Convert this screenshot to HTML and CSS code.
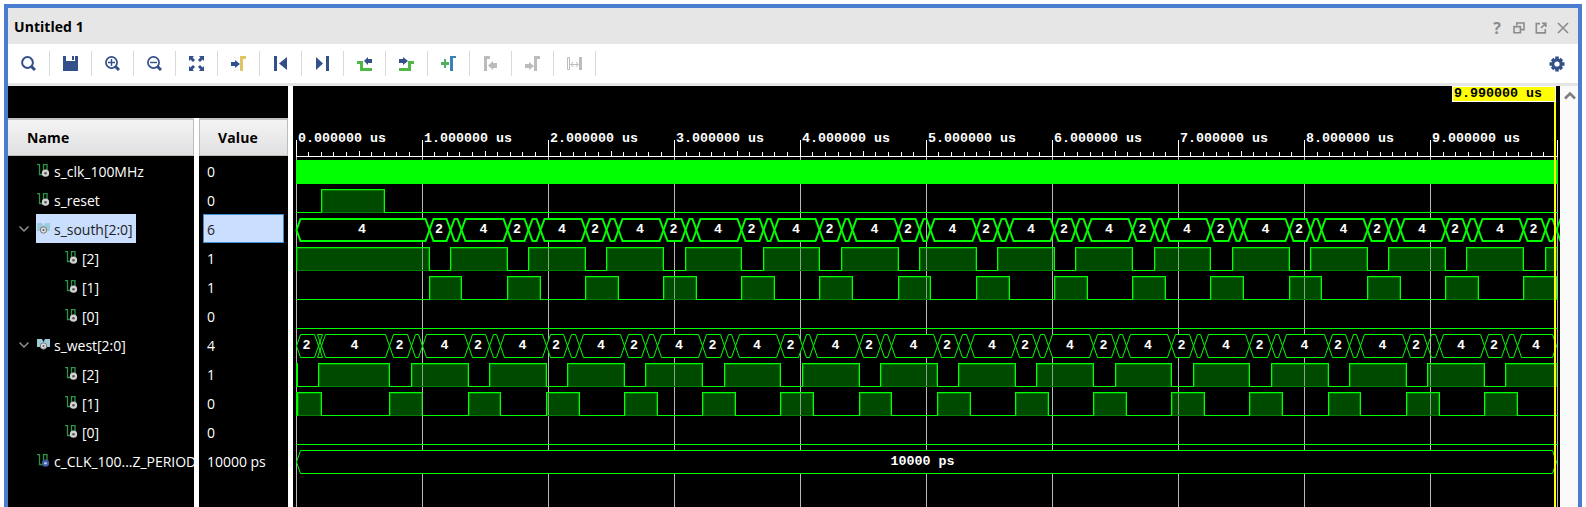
FILE: index.html
```html
<!DOCTYPE html>
<html lang="en">
<head>
<meta charset="utf-8">
<title>Untitled 1</title>
<link rel="stylesheet" href="styles.css">
</head>
<body>
<div class="window">
  <header class="titlebar">
    <h1 class="title">Untitled 1</h1>
    <div class="window-actions">
      <span class="help">?</span>
      <svg width="12" height="12" viewBox="0 0 12 12"><path d="M3.8 3.2V1h7.2v6.6H8.2M1 4.6h6.4v6.2H1z" class="line-grey"/></svg>
      <svg width="12" height="12" viewBox="0 0 12 12"><path d="M5 1.6H1.3v9.3h9V7M6 6l4-4M7 1.3h3.8V5" class="line-grey"/></svg>
      <svg width="12" height="12" viewBox="0 0 12 12"><path d="M1 1l10 10M11 1L1 11" class="line-grey"/></svg>
    </div>
  </header>

  <nav class="toolbar">
    <span class="tool"><svg width="15" height="15"><circle cx="6.5" cy="6.5" r="5.4" class="ring"/><path d="M10.5 10.5l3.5 3.5" class="handle"/></svg></span>
    <span class="tool"><svg width="15" height="15"><path d="M0 0h3v5h9V0h3v15H0z" fill="#34508a"/><path d="M9 0h2v4H9z" fill="#34508a"/></svg></span>
    <span class="tool"><svg width="15" height="15"><circle cx="6.5" cy="6.5" r="5.6" class="ring thin"/><path d="M10.5 10.5l3.5 3.5" class="handle"/><path d="M3 6.5h7M6.5 3v7" class="sign"/></svg></span>
    <span class="tool"><svg width="15" height="15"><circle cx="6.5" cy="6.5" r="5.6" class="ring thin"/><path d="M10.5 10.5l3.5 3.5" class="handle"/><path d="M3 6.5h7" class="sign"/></svg></span>
    <span class="tool"><svg width="15" height="15"><path d="M0 0h5L3.6 1.4 6 4 4 6 1.400 3.600 0 5zM15 0v5l-1.400-1.400L11 6 9 4l2.400-2.600L10 0zM0 15v-5l1.400 1.400L4 9l2 2-2.400 2.600L5 15zM15 15h-5l1.400-1.400L9 11l2-2 2.600 2.400L15 10z" fill="#34508a"/></svg></span>
    <span class="tool"><svg width="15" height="15"><path d="M0 6h4V4l5 4-5 4v-2H0z" fill="#34508a"/><path d="M9 0h6v3h-3v12H9z" fill="#e0c562"/></svg></span>
    <span class="tool"><svg width="15" height="15"><path d="M1 0h3v15H1zM14 1v13L6 7.500z" fill="#34508a"/></svg></span>
    <span class="tool"><svg width="15" height="15"><path d="M11 0h3v15h-3zM1 1v13l7-6.500z" fill="#34508a"/></svg></span>
    <span class="tool"><svg width="15" height="15"><path d="M0 5h6v7h9v3H3V8H0z" fill="#4db944"/><path d="M15 3h-4V1L7 5l4 4V7h4z" fill="#34508a"/></svg></span>
    <span class="tool"><svg width="15" height="15"><path d="M0 12h9V5h6v3h-3v7H0z" fill="#4db944"/><path d="M0 3h4V1l5 4-5 4V7H0z" fill="#34508a"/></svg></span>
    <span class="tool"><svg width="15" height="15"><path d="M0 6h3V3h2v3h3v3H5v3H3V9H0z" fill="#4db05a"/><path d="M9 0h6v2h-3v13H9z" fill="#3b80b8"/></svg></span>
    <span class="tool"><svg width="15" height="15"><path d="M1 0h6v3H4v12H1zM14 7h-4V5L5 9.500l5 4.500v-2h4z" fill="#bcbcbc"/></svg></span>
    <span class="tool"><svg width="15" height="15"><path d="M15 0H9v15h3V3h3zM0 8h4V6l5 4-5 4v-2H0z" fill="#bcbcbc"/></svg></span>
    <span class="tool"><svg width="15" height="15"><path d="M12 1h3v13h-3z" fill="#bcbcbc"/><path d="M.5 1.500h2v12h-2zM3.500 8.500h8M6 6l-2 2.500L6 11M9 6l2 2.500L9 11" fill="none" stroke="#bcbcbc"/></svg></span>
    <svg class="settings" width="16" height="16" viewBox="-8 -8 16 16"><g fill="#34508a"><path d="M-1.800-7.500h3.600v15h-3.600zM-7.500-1.800v3.600h15v-3.600z"/><path d="M-1.800-7h3.600V7h-3.600zM-7-1.800v3.600H7v-3.600z" transform="rotate(45)"/><circle r="5.600"/></g><circle r="2.600" fill="#fff"/></svg>
  </nav>

  <main class="viewer">
    <section class="signals">
      <div class="spacer"></div>
      <div class="columns">
        <div class="column names" id="names"><div class="head">Name</div></div>
        <div class="column values" id="values"><div class="head">Value</div></div>
      </div>
    </section>
    <svg class="wave" id="wave" width="1267" height="421" viewBox="293 86 1267 421"></svg>
    <aside class="scroll"><svg width="12" height="9" viewBox="0 0 12 9"><path d="M1 7.500l5-5 5 5" fill="none" stroke="#7d7d7d" stroke-width="2.500"/></svg></aside>
  </main>
</div>
<script src="wave.js"></script>
</body>
</html>
```
FILE: styles.css
```css
* { box-sizing: border-box; }
body {
  margin: 0;
  height: 507px;
  overflow: hidden;
  background: #fff;
  font-family: "Open Sans", "Noto Sans", sans-serif;
}
.window {
  width: 1578px;
  height: 503px;
  margin: 4px 0 0 4px;
  border: 4px solid #4a7dd0;
  border-bottom: 0;
  display: flex;
  flex-direction: column;
}
.titlebar {
  height: 36px;
  flex: none;
  background: #e6e6e6;
  display: flex;
  align-items: center;
  justify-content: space-between;
  padding: 1px 9px 0 6px;
}
.title { margin: 0; font-size: 14px; font-weight: 700; letter-spacing: 0.05px; }
.window-actions { display: flex; align-items: center; gap: 10px; padding-top: 3px; }
.window-actions svg { display: block; }
.help { width: 12px; color: #8c8c8c; font-size: 16px; line-height: 14px; font-weight: 700; text-align: center; }
.line-grey { fill: none; stroke: #8c8c8c; stroke-width: 1.6; }
.toolbar {
  height: 42px;
  flex: none;
  background: #fff;
  border-bottom: 3px solid #e6e6e6;
  display: flex;
  align-items: center;
}
.tool {
  width: 42px;
  height: 25px;
  border-right: 1px solid #d9d9d9;
  display: flex;
  align-items: center;
  justify-content: center;
}
.tool svg { display: block; }
.ring { fill: none; stroke: #34508a; stroke-width: 2; }
.thin { stroke-width: 1.7; }
.handle { stroke: #34508a; stroke-width: 3; }
.sign { stroke: #34508a; stroke-width: 1.4; }
.settings { margin: 0 13px 0 auto; }
.viewer { flex: 1; display: flex; min-height: 0; background: #fff; }
.signals { width: 280px; margin-right: 5px; background: #000; display: flex; flex-direction: column; }
.spacer { height: 32px; flex: none; }
.columns { flex: 1; display: flex; gap: 5px; background: #fff; min-height: 0; }
.column { background: #000; overflow: hidden; }
.names { width: 186px; }
.values { width: 89px; }
.head {
  height: 38px;
  border: 1px solid #bdbdbd;
  border-left-width: 0;
  border-top: 2px solid #c2c2c2;
  background: linear-gradient(#f4f4f4, #e0e0e2);
  font-weight: 700;
  font-size: 14px;
  letter-spacing: 0.1px;
  line-height: 36px;
  padding-left: 19px;
}
.values .head { border-left-width: 1px; padding-left: 18px; }
.row {
  height: 29px;
  display: flex;
  align-items: center;
  color: #fff;
  font-size: 14px;
  letter-spacing: -0.02px;
  white-space: nowrap;
}
.names .row { padding-left: 9px; }
.names .child { padding-left: 37px; }
.toggle { width: 19px; flex: none; display: flex; padding-left: 1px; }
.item { height: 29px; display: flex; align-items: center; gap: 4px; padding: 0 3px 0 1px; }
.item svg { display: block; flex: none; }
.label { padding-top: 2px; }
.selected .item { background: #cadeff; color: #222; }
.values .row { padding-left: 4px; }
.cell { width: 81px; height: 29px; padding-left: 3px; border: 1px solid transparent; line-height: 29px; }
.selected .cell { background: #cadeff; border-color: #3f8cd0; color: #222; }
.wave { display: block; background: #000; flex: none; }
.wave text { font-family: "Liberation Mono", "DejaVu Sans Mono", monospace; font-weight: 700; font-size: 13.34px; fill: #fff; }
.wave .cursor-text { fill: #000; }
.scroll { width: 18px; background: #fafafa; padding: 5px 0 0 4px; }
.scroll svg { display: block; }
```
FILE: wave.js
```js
const signals = [
  ["s_clk_100MHz", "0", "signal"],
  ["s_reset", "0", "signal"],
  ["s_south[2:0]", "6", "bus", "selected"],
  ["[2]", "1", "signal", "child"],
  ["[1]", "1", "signal", "child"],
  ["[0]", "0", "signal", "child"],
  ["s_west[2:0]", "4", "bus", ""],
  ["[2]", "1", "signal", "child"],
  ["[1]", "0", "signal", "child"],
  ["[0]", "0", "signal", "child"],
  ["c_CLK_100...Z_PERIOD", "10000 ps", "constant"]
];

function icon(kind) {
  if (kind === "bus") {
    return '<svg width="13" height="13"><path d="M0 1h5l1.500 3L8 1h5v8H0z" fill="#9ccbdc"/><circle cx="6.500" cy="8" r="3.200" fill="#ddd" stroke="#777"/><circle cx="6.500" cy="8" r="1" fill="#555"/></svg>';
  }
  const dot = kind === "constant" ? ["#405a9c", "#b8c8ee"] : ["#d2d2d2", "#555"];
  return '<svg width="13" height="13"><path d="M0 .5h2.500v10H6M6.500 8V.5h3.500V6" fill="none" stroke="#2e9447" stroke-width="1.300"/>' +
    `<circle cx="8.500" cy="9.200" r="3.600" fill="${dot[0]}"/><circle cx="8.500" cy="9.200" r="1.300" fill="${dot[1]}"/></svg>`;
}

let nameRows = "", valueRows = "";
for (const [name, value, kind, state = ""] of signals) {
  const arrow = kind === "bus"
    ? '<svg width="12" height="8"><path d="M1.500 1.500L6 6l4.500-4.500" fill="none" stroke="#909090" stroke-width="1.500"/></svg>' : "";
  nameRows += `<div class="row ${state}"><span class="toggle">${arrow}</span><span class="item">${icon(kind)}<span class="label">${name}</span></span></div>`;
  valueRows += `<div class="row ${state}"><span class="cell">${value}</span></div>`;
}
document.getElementById("names").insertAdjacentHTML("beforeend", nameRows);
document.getElementById("values").insertAdjacentHTML("beforeend", valueRows);

const START = 296, END = 1557, SCALE = 126.05;
const GREEN = "#00ff00";
let out = "";
const rect = (x, y, w, h, fill) => { out += `<rect x="${x}" y="${y}" width="${w}" height="${h}" fill="${fill}"/>`; };
const text = (x, y, s, cls = "") => { out += `<text class="${cls}" x="${x}" y="${y}" xml:space="preserve">${s}</text>`; };
const low = row => 183 + 29 * row;

/* Time ruler and grid */
for (let i = 0; i <= 100; i++) {
  const x = Math.floor(START + i * SCALE / 10 + (i === 100 ? 0.5 : 0));
  if (i % 10 === 0) {
    rect(x, 140, 1, 17, "#fff");
    rect(x, 157, 1, 350, "#b8b8b8");
    if (i < 100) text(x + 2, 142, (i / 10) + ".000000 us");
  } else {
    const top = i % 5 === 0 ? 151 : 152;
    rect(x, top, 1, 156 - top, "#fff");
  }
}
rect(START, 156, 1261, 1, "#fff");

/* One-bit signal: list of [rise, fall] pixel spans */
function digital(row, spans) {
  const y = low(row), top = y - 23;
  let x = START;
  for (const [rise, fall] of spans) {
    if (rise > x) rect(x, y, rise - x, 1, GREEN);
    const end = Math.min(fall, END);
    out += `<rect x="${rise + 1}" y="${top + 1}" width="${end - rise - 1}" height="23" fill="#008000" fill-opacity=".58"/>`;
    out += `<rect x="${rise + 1.5}" y="${top + 1.5}" width="${end - rise - 2}" height="22" fill="none" stroke="#008000"/>`;
    rect(rise, top, end - rise + 1, 1, GREEN);
    rect(rise, top, 1, 24, GREEN);
    if (fall < END) rect(fall, top, 1, 24, GREEN);
    x = end;
  }
  if (x < END) rect(x, y, END - x + 1, 1, GREEN);
}

/* Bus: consecutive [start, end, label] cells */
function bus(row, cells, thick) {
  const y = low(row) + (thick ? 0.0 : 0.5), top = y - (thick ? 22 : 23), mid = (y + top) / 2;
  for (const [a0, b0, label] of cells) {
    const a = a0 + 0.5, b = b0 + 0.5;
    const s = 4;
    out += `<path d="M${a} ${mid}L${a + s} ${top}H${b - s}L${b} ${mid}L${b - s} ${y}H${a + s}Z" fill="${label ? "#000" : "none"}" stroke="${GREEN}" stroke-width="${thick ? 2 : 1}"/>`;
    if (label) text((a + b) / 2 - label.length * 4 - (label.length > 1 ? 4 : 1), low(row) - 8, label);
  }
}

const southFall = [429, 507, 585, 663, 741, 819, 898, 976, 1054, 1132, 1210, 1289, 1367, 1445, 1523];
const southRise = [450, 528, 606, 685, 763, 841, 919, 997, 1075, 1154, 1232, 1310, 1388, 1466, 1545];
const southEnd = [461, 540, 618, 696, 774, 852, 930, 1009, 1087, 1165, 1243, 1321, 1400, 1478, 1556];
const westFall = [389, 468, 546, 624, 702, 780, 859, 937, 1015, 1093, 1171, 1249, 1328, 1406, 1484];
const westRise = [411, 489, 567, 645, 724, 802, 880, 958, 1036, 1115, 1193, 1271, 1349, 1427, 1505];
const westEnd = [422, 500, 579, 657, 735, 813, 891, 970, 1048, 1126, 1204, 1282, 1360, 1439, 1517];

rect(START, 160, 1262, 24, GREEN);
digital(1, [[321, 384]]);

const south = [[296, 429, "4"]];
southFall.forEach((x, i) => {
  south.push([x, southRise[i], "2"], [southRise[i], southEnd[i], ""]);
  if (i < 14) south.push([southEnd[i], southFall[i + 1], "4"]);
});
south.push([1556, 1565, ""]);
bus(2, south, true);
digital(3, southFall.map((x, i) => [i ? southRise[i - 1] : 296, x]).concat([[1545, END]]));
digital(4, southFall.map((x, i) => [x, southEnd[i]]));
digital(5, []);

const west = [[296, 318, "2"], [318, 321, ""], [321, 389, "4"]];
westFall.forEach((x, i) => {
  west.push([x, westRise[i], "2"], [westRise[i], westEnd[i], ""], [westEnd[i], i < 14 ? westFall[i + 1] : 1556, "4"]);
});
bus(6, west, false);
digital(7, [[318, 389]].concat(westRise.map((x, i) => [x, i < 14 ? westFall[i + 1] : END])));
rect(296, 363, 2, 24, GREEN);
digital(8, [[297, 321]].concat(westFall.map((x, i) => [x, westEnd[i]])));
rect(296, 392, 2, 24, GREEN);
digital(9, []);
bus(10, [[296, 1556, "10000 ps"]], false);

/* Grid stays faintly visible over high levels */
for (let i = 1; i < 10; i++) {
  const x = Math.floor(START + i * SCALE);
  for (const row of [3, 4, 7, 8]) {
    const top = low(row) - 22;
    out += `<rect x="${x}" y="${top}" width="1" height="22" fill="#b8b8b8" fill-opacity=".5"/>`;
  }
}

/* Cursor */
rect(1554, 86, 2, 421, "#ffff00");
out += '<rect x="1452.5" y="86.5" width="103" height="15" fill="#ffff00" stroke="#fff"/>';
text(1454, 97, "9.990000 us", "cursor-text");
document.getElementById("wave").innerHTML = out;
```
